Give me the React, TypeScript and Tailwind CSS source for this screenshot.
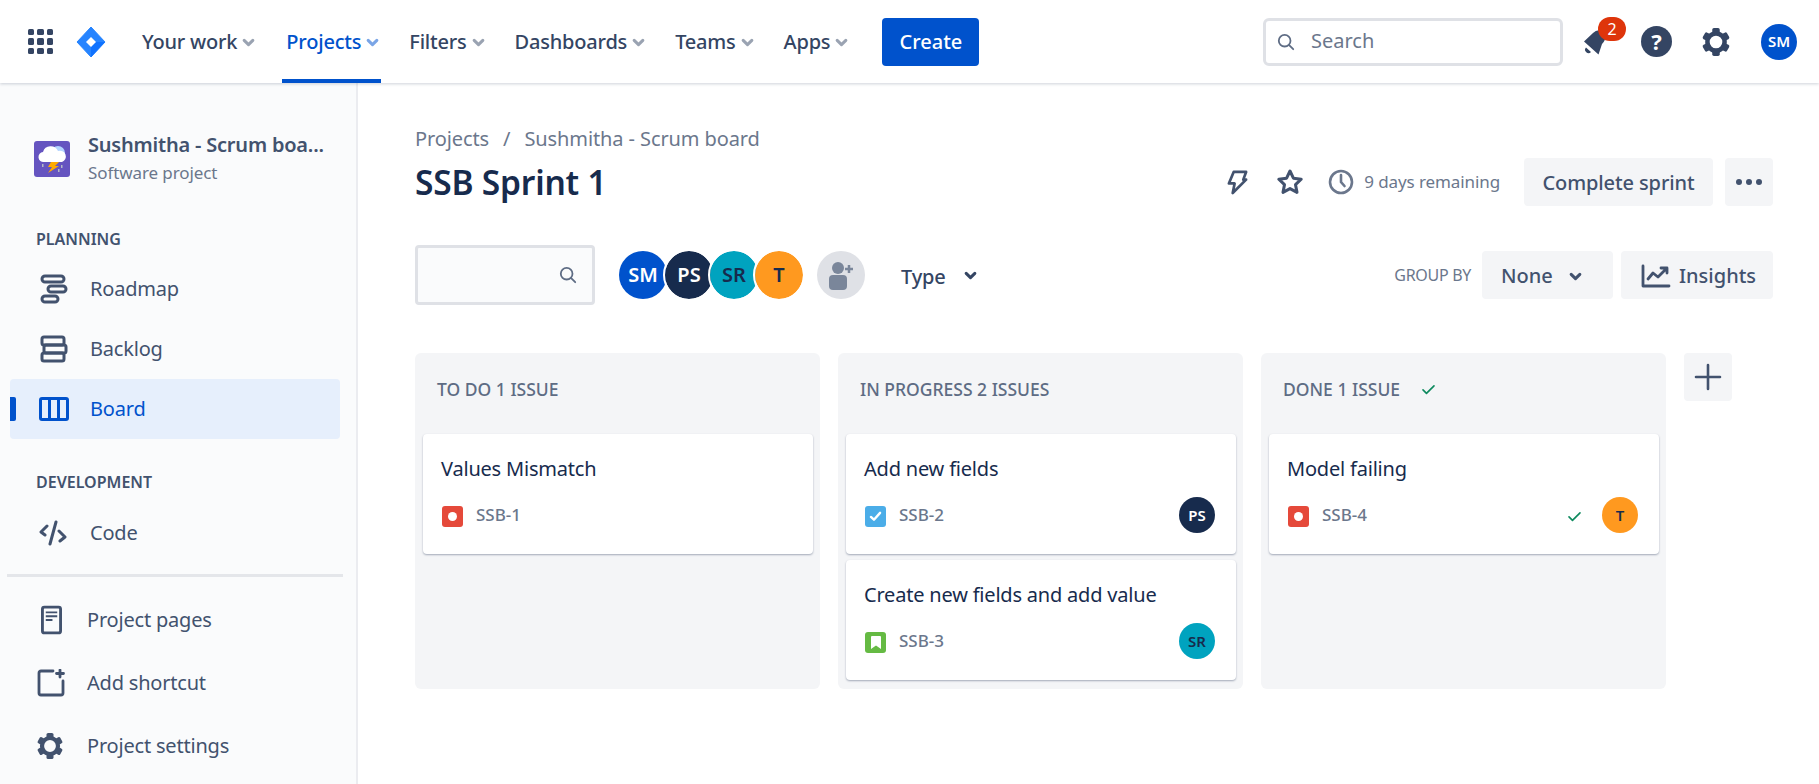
import React from "react";

const Chevron = ({ className = "" }: { className?: string }) => (
  <svg viewBox="0 0 12 8" className={className} fill="none" stroke="currentColor" strokeWidth="2.8" strokeLinecap="round" strokeLinejoin="round">
    <path d="M2 2l4 4 4-4" />
  </svg>
);

const Check = ({ className = "" }: { className?: string }) => (
  <svg viewBox="0 0 16 12" className={className} fill="none" stroke="#0e8a5f" strokeWidth="1.8" strokeLinecap="round" strokeLinejoin="round">
    <path d="M2 6.5l3.8 3.8L14 2" />
  </svg>
);

const Gear = ({ className = "" }: { className?: string }) => (
  <svg viewBox="0 0 28 28" className={className} fill="none">
    <circle cx="14" cy="14" r="8" stroke="currentColor" strokeWidth="4.2" />
    <g fill="currentColor">
      <rect x="10.5" y="1" width="7" height="5" rx="1.6" />
      <rect x="10.5" y="22" width="7" height="5" rx="1.6" />
      <rect x="10.5" y="1" width="7" height="5" rx="1.6" transform="rotate(60 14 14)" />
      <rect x="10.5" y="1" width="7" height="5" rx="1.6" transform="rotate(120 14 14)" />
      <rect x="10.5" y="1" width="7" height="5" rx="1.6" transform="rotate(240 14 14)" />
      <rect x="10.5" y="1" width="7" height="5" rx="1.6" transform="rotate(300 14 14)" />
    </g>
  </svg>
);

const SearchIcon = ({ className = "" }: { className?: string }) => (
  <svg viewBox="0 0 20 20" className={className} fill="none" stroke="currentColor" strokeWidth="2" strokeLinecap="round">
    <circle cx="8.5" cy="8.5" r="6.5" />
    <path d="M13.5 13.5L18 18" />
  </svg>
);

const NavItem = ({ label, active, ml }: { label: string; active?: boolean; ml: string }) => (
  <div className={`relative flex h-full items-center ${ml}`}>
    <span className={`pt-[1px] text-[20px] font-medium tracking-[-0.2px] ${active ? "text-[#0052cc]" : "text-[#344563]"}`}>{label}</span>
    <Chevron className={`ml-[5px] mt-[2px] h-[9px] w-[13px] ${active ? "text-[#7aa5e6]" : "text-[#9aa3b2]"}`} />
    {active && <div className="absolute bottom-0 left-[-4px] right-[-2px] h-[4px] bg-[#0052cc]" />}
  </div>
);

const Avatar = ({ text, bg, fg, size }: { text: string; bg: string; fg: string; size: string }) => (
  <div className={`flex shrink-0 items-center justify-center rounded-full font-semibold ${bg} ${fg} ${size}`}>{text}</div>
);

const SideItem = ({ icon, label, active, iconBox }: { icon: React.ReactNode; label: string; active?: boolean; iconBox: string }) => (
  <div className={`relative mx-[10px] flex h-[60px] w-[330px] shrink-0 items-center rounded-[4px] ${active ? "bg-[#e6effc] text-[#0052cc]" : "text-[#42526e]"}`}>
    {active && <div className="absolute left-0 top-[18px] h-[24px] w-[6px] rounded-r-[2px] bg-[#0052cc]" />}
    <div className={`flex shrink-0 items-center justify-center ${iconBox}`}>{icon}</div>
    <span className="text-[20px] tracking-[-0.2px]">{label}</span>
  </div>
);

const BugIcon = () => (
  <div className="flex h-[21px] w-[21px] shrink-0 items-center justify-center rounded-[3px] bg-[#e5493a]">
    <div className="h-[9px] w-[9px] rounded-full bg-white" />
  </div>
);

const TaskIcon = () => (
  <div className="flex h-[21px] w-[21px] shrink-0 items-center justify-center rounded-[3px] bg-[#4bade8]">
    <svg viewBox="0 0 14 12" className="h-[11px] w-[13px]" fill="none" stroke="#fff" strokeWidth="2.6" strokeLinecap="round" strokeLinejoin="round">
      <path d="M2 6.5l3.3 3L12 2" />
    </svg>
  </div>
);

const StoryIcon = () => (
  <div className="flex h-[21px] w-[21px] shrink-0 items-center justify-center rounded-[3px] bg-[#65ba43]">
    <svg viewBox="0 0 10 13" className="h-[13px] w-[10px]" fill="#fff">
      <path d="M0 1a1 1 0 011-1h8a1 1 0 011 1v12L5 9.5 0 13z" />
    </svg>
  </div>
);

const IssueCard = ({ title, id, icon, right, mt }: { title: string; id: string; icon: React.ReactNode; right?: React.ReactNode; mt?: string }) => (
  <div className={`ml-[8px] mr-[7px] flex h-[120px] flex-col rounded-[4px] bg-white pl-[18px] pr-[21px] shadow-[0_1px_2px_rgba(9,30,66,0.35)] ${mt ?? ""}`}>
    <div className="mt-[21px] h-[28px] text-[20px] leading-[28px] tracking-[-0.2px] text-[#172b4d]">{title}</div>
    <div className="mt-[14px] flex h-[36px] items-center">
      <div className="ml-[1px] mt-[2px]">{icon}</div>
      <span className="ml-[13px] text-[17px] font-medium text-[#6b778c]">{id}</span>
      <div className="ml-auto flex items-center">{right}</div>
    </div>
  </div>
);

const Column = ({ title, children, check }: { title: string; children: React.ReactNode; check?: boolean }) => (
  <div className="h-[336px] w-[405px] shrink-0 rounded-[6px] bg-[#f4f5f7]">
    <div className="flex h-[81px] items-center pb-[8px] pl-[22px]">
      <span className="text-[17.5px] font-medium text-[#5e6c84]">{title}</span>
      {check && <Check className="ml-[21px] h-[11px] w-[15px]" />}
    </div>
    {children}
  </div>
);

export default function App() {
  return (
    <div className="flex h-[784px] w-[1819px] flex-col overflow-hidden bg-white font-['Noto_Sans',sans-serif]">
      <header className="relative z-10 flex h-[83px] shrink-0 items-center bg-white pl-[28px] shadow-[0_1px_3px_rgba(9,30,66,0.2)]">
        <div className="grid h-[25px] w-[25px] grid-cols-3 gap-[3px]">
          {Array.from({ length: 9 }).map((_, i) => (
            <div key={i} className="rounded-[1.5px] bg-[#344563]" />
          ))}
        </div>
        <svg viewBox="0 0 30 30" className="ml-[23px] h-[30px] w-[30px]">
          <path d="M15 0L29 15 15 30 1 15z" fill="#2684ff" stroke="#2684ff" strokeWidth="1" strokeLinejoin="round" />
          <path d="M15 15h14L15 30z" fill="#0065ff" opacity="0.6" />
          <path d="M15 10l5 5-5 5-5-5z" fill="#fff" />
        </svg>
        <div className="flex h-full items-center">
          <NavItem label="Your work" ml="ml-[36px]" />
          <NavItem label="Projects" active ml="ml-[31px]" />
          <NavItem label="Filters" ml="ml-[30px]" />
          <NavItem label="Dashboards" ml="ml-[30px]" />
          <NavItem label="Teams" ml="ml-[30px]" />
          <NavItem label="Apps" ml="ml-[30px]" />
        </div>
        <button className="ml-[34px] flex h-[48px] w-[97px] items-center justify-center rounded-[4px] bg-[#0052cc] pt-[1px] text-[20px] font-medium text-white">Create</button>
        <div className="ml-auto mr-[22px] flex items-center">
          <div className="flex h-[48px] w-[300px] items-center rounded-[6px] border-[3px] border-[#dfe1e6] pl-[11px]">
            <SearchIcon className="h-[18px] w-[18px] text-[#5e6c84]" />
            <span className="ml-[16px] pb-[2px] text-[20px] text-[#6b778c]">Search</span>
          </div>
          <div className="relative ml-[17px] h-[32px] w-[30px]">
            <svg viewBox="0 0 30 32" className="h-[32px] w-[30px]" fill="#344563">
              <path d="M4 15.500L13 7Q17 3 22 5L25 10Q26 14 22 18L18.500 28.500z" />
              <path d="M6 21.500l5 4.500a3 3 0 01-5-4.500z" />
            </svg>
            <div className="absolute left-[18px] top-[-9px] flex h-[24px] w-[28px] items-center justify-center rounded-full bg-[#de350b] text-[16px] text-white">2</div>
          </div>
          <div className="ml-[31px] flex h-[31px] w-[31px] items-center justify-center rounded-full bg-[#344563] text-[22px] font-bold text-white">?</div>
          <Gear className="ml-[29px] h-[30px] w-[30px] text-[#344563]" />
          <Avatar text="SM" bg="bg-[#0052cc]" fg="text-white" size="ml-[30px] h-[36px] w-[36px] text-[15px]" />
        </div>
      </header>

      <div className="flex min-h-0 flex-1">
        <aside className="flex w-[358px] shrink-0 flex-col border-r-[2px] border-[#ebecf0] bg-[#fafbfc]">
          <div className="ml-[34px] mt-[50px] flex items-center">
            <svg viewBox="0 0 36 36" className="h-[36px] w-[36px] shrink-0">
              <rect width="36" height="36" rx="3" fill="#6554c0" />
              <circle cx="24" cy="12" r="7" fill="#b3d4ff" />
              <path d="M10 21a5 5 0 01-1-10 8 8 0 0115-1 5.500 5.500 0 014 11z" fill="#fff" />
              <path d="M17 21h8l-4 4h4l-11 7 4-6h-4z" fill="#ffab00" />
              <g fill="#b3bac5">
                <rect x="8" y="23" width="1.500" height="3" />
                <rect x="27" y="24" width="1.500" height="3" />
                <rect x="24" y="28" width="1.500" height="3" />
              </g>
            </svg>
            <div className="ml-[18px]">
              <div className="text-[20px] font-semibold leading-[24px] tracking-[-0.2px] text-[#42526e]">Sushmitha - Scrum boa...</div>
              <div className="mt-[5px] text-[17px] leading-[22px] tracking-[-0.1px] text-[#6b778c]">Software project</div>
            </div>
          </div>
          <div className="ml-[36px] mt-[45px] h-[20px] text-[16px] font-semibold leading-[20px] text-[#42526e]">PLANNING</div>
          <div className="mt-[10px] flex flex-col">
            <SideItem
              label="Roadmap"
              iconBox="w-[80px] pl-[8px]"
              icon={
                <svg viewBox="0 0 28 30" className="h-[30px] w-[28px]" fill="none" stroke="#42526e" strokeWidth="3">
                  <rect x="2" y="2" width="22" height="6" rx="3" />
                  <rect x="8" y="12" width="18" height="6" rx="3" />
                  <rect x="2" y="22" width="16" height="6" rx="3" />
                </svg>
              }
            />
            <SideItem
              label="Backlog"
              iconBox="w-[80px] pl-[8px]"
              icon={
                <svg viewBox="0 0 28 28" className="h-[28px] w-[28px]" fill="none" stroke="#42526e" strokeWidth="3" strokeLinejoin="round">
                  <rect x="2" y="2" width="22" height="8" rx="2" />
                  <rect x="4" y="10" width="22" height="8" rx="2" />
                  <rect x="2" y="18" width="22" height="8" rx="2" />
                </svg>
              }
            />
            <SideItem
              label="Board"
              active
              iconBox="w-[80px] pl-[8px]"
              icon={
                <svg viewBox="0 0 30 24" className="h-[24px] w-[30px]" fill="none" stroke="#0052cc" strokeWidth="3" strokeLinejoin="round">
                  <rect x="1.500" y="1.500" width="27" height="21" rx="1.500" />
                  <path d="M10.500 1.500v21M19.500 1.500v21" />
                </svg>
              }
            />
          </div>
          <div className="ml-[36px] mt-[33px] h-[20px] text-[16px] font-semibold leading-[20px] text-[#42526e]">DEVELOPMENT</div>
          <div className="mt-[11px]">
            <SideItem
              label="Code"
              iconBox="w-[80px] pl-[6px]"
              icon={
                <svg viewBox="0 0 28 26" className="h-[26px] w-[28px]" fill="none" stroke="#42526e" strokeWidth="3" strokeLinecap="round" strokeLinejoin="round">
                  <path d="M8 6l-6 6 4 3M20 11l6 6-5 4M17 2l-6 22" />
                </svg>
              }
            />
          </div>
          <div className="mx-[7px] mt-[11px] h-[3px] w-[336px] shrink-0 bg-[#e4e6ea]" />
          <div className="mt-[13px] flex flex-col gap-[3px]">
            <SideItem
              label="Project pages"
              iconBox="w-[77px] pl-[5px]"
              icon={
                <svg viewBox="0 0 22 30" className="h-[30px] w-[21px]" fill="none" stroke="#42526e" strokeWidth="3" strokeLinejoin="round">
                  <rect x="1.500" y="1.500" width="19" height="27" rx="2" />
                  <path d="M5 7h12M5 11h12M5 15h7" strokeWidth="2" />
                </svg>
              }
            />
            <SideItem
              label="Add shortcut"
              iconBox="w-[77px] pl-[5px]"
              icon={
                <svg viewBox="0 0 28 28" className="h-[28px] w-[28px]" fill="none" stroke="#42526e" strokeWidth="2.800" strokeLinecap="round" strokeLinejoin="round">
                  <path d="M16 2H4a2 2 0 00-2 2v20a2 2 0 002 2h20a2 2 0 002-2V12" />
                  <path d="M23 1v7M19.500 4.500h7" />
                </svg>
              }
            />
            <SideItem
              label="Project settings"
              iconBox="w-[77px] pl-[3px]"
              icon={<Gear className="h-[28px] w-[28px] text-[#42526e]" />}
            />
          </div>
        </aside>

        <main className="min-w-0 flex-1 pl-[57px] pr-[46px]">
          <div className="mt-[42px] flex h-[27px] items-center text-[20px] tracking-[-0.1px] text-[#6b778c]">
            <span>Projects</span>
            <span className="mx-[14px]">/</span>
            <span>Sushmitha - Scrum board</span>
          </div>
          <div className="mt-[6px] flex h-[48px] items-center">
            <h1 className="text-[33.5px] font-semibold tracking-[-0.2px] text-[#172b4d]">SSB Sprint 1</h1>
            <div className="ml-auto flex items-center">
              <svg viewBox="0 0 24 28" className="h-[27px] w-[23px]" fill="none" stroke="#42526e" strokeWidth="2.800" strokeLinejoin="round">
                <path d="M8 3h13l-3 8h3L7 25l2-10H3z" />
              </svg>
              <svg viewBox="0 0 28 28" className="ml-[27px] h-[28px] w-[28px]" fill="none" stroke="#42526e" strokeWidth="3" strokeLinejoin="round">
                <path d="M14 3l3.400 7.200 7.800 1-5.700 5.400 1.500 7.800-7-3.800-7 3.800 1.500-7.800-5.700-5.400 7.800-1z" />
              </svg>
              <svg viewBox="0 0 26 26" className="ml-[24px] h-[26px] w-[26px]" fill="none" stroke="#6b778c" strokeWidth="2.600" strokeLinecap="round">
                <circle cx="13" cy="13" r="11" />
                <path d="M13 6v7l3.500 4" />
              </svg>
              <span className="ml-[10px] text-[17px] tracking-[-0.1px] text-[#6b778c]">9 days remaining</span>
              <button className="ml-[24px] flex h-[48px] w-[189px] items-center justify-center rounded-[4px] bg-[#f4f5f7] pt-[1px] text-[20px] font-medium tracking-[-0.1px] text-[#42526e]">Complete sprint</button>
              <button className="ml-[12px] flex h-[48px] w-[48px] items-center justify-center gap-[4px] rounded-[4px] bg-[#f4f5f7]">
                <span className="h-[6px] w-[6px] rounded-full bg-[#42526e]" />
                <span className="h-[6px] w-[6px] rounded-full bg-[#42526e]" />
                <span className="h-[6px] w-[6px] rounded-full bg-[#42526e]" />
              </button>
            </div>
          </div>
          <div className="mt-[39px] flex h-[60px] items-center">
            <div className="flex h-[60px] w-[180px] items-center justify-end rounded-[4px] border-[3px] border-[#dfe1e6] bg-[#fafbfc] pr-[15px]">
              <SearchIcon className="h-[18px] w-[18px] text-[#5e6c84]" />
            </div>
            <div className="ml-[24px] flex items-center">
              <Avatar text="SM" bg="bg-[#0052cc]" fg="text-white" size="h-[48px] w-[48px] text-[20px]" />
              <Avatar text="PS" bg="bg-[#172b4d]" fg="text-white" size="-ml-[2px] h-[48px] w-[48px] text-[20px] outline-[2px] outline-white" />
              <Avatar text="SR" bg="bg-[#00a3bf]" fg="text-[#172b4d]" size="-ml-[3px] h-[48px] w-[48px] text-[20px] outline-[2px] outline-white" />
              <Avatar text="T" bg="bg-[#ff991f]" fg="text-[#172b4d]" size="-ml-[3px] h-[48px] w-[48px] text-[20px] outline-[2px] outline-white" />
            </div>
            <div className="ml-[14px] flex h-[48px] w-[48px] items-center justify-center rounded-full bg-[#dfe1e6]">
              <svg viewBox="0 0 28 32" className="h-[32px] w-[28px]" fill="#7a869a">
                <circle cx="11" cy="9" r="6" />
                <path d="M2 20a4 4 0 014-4h10a4 4 0 014 4v7a4 4 0 01-4 4H6a4 4 0 01-4-4z" />
                <path d="M22 6v8M18 10h8" stroke="#7a869a" strokeWidth="2.500" />
              </svg>
            </div>
            <span className="ml-[36px] pt-[3px] text-[20px] font-medium tracking-[-0.2px] text-[#344563]">Type</span>
            <Chevron className="ml-[19px] h-[9px] w-[13px] text-[#344563]" />
            <div className="ml-auto flex items-center">
              <span className="text-[16px] tracking-[-0.3px] text-[#6b778c]">GROUP BY</span>
              <button className="ml-[11px] flex h-[48px] w-[131px] items-center rounded-[4px] bg-[#f4f5f7] pl-[19px] pt-[2px] text-[20px] font-medium text-[#42526e]">
                None
                <Chevron className="ml-[16px] h-[9px] w-[13px]" />
              </button>
              <button className="ml-[8px] flex h-[48px] w-[152px] items-center rounded-[4px] bg-[#f4f5f7] pl-[20px] pt-[2px] text-[20px] font-medium text-[#42526e]">
                <svg viewBox="0 0 30 24" className="mr-[8px] h-[24px] w-[30px]" fill="none" stroke="#42526e" strokeWidth="2.800" strokeLinecap="round" strokeLinejoin="round">
                  <path d="M2 2v20h26M7 15l5-6 5 4 8-8M20 4h6v5" />
                </svg>
                Insights
              </button>
            </div>
          </div>
          <div className="mt-[48px] flex items-start gap-[18px]">
            <Column title="TO DO 1 ISSUE">
              <IssueCard title="Values Mismatch" id="SSB-1" icon={<BugIcon />} />
            </Column>
            <Column title="IN PROGRESS 2 ISSUES">
              <IssueCard title="Add new fields" id="SSB-2" icon={<TaskIcon />} right={<Avatar text="PS" bg="bg-[#172b4d]" fg="text-white" size="h-[36px] w-[36px] text-[15px]" />} />
              <IssueCard title="Create new fields and add value" id="SSB-3" icon={<StoryIcon />} mt="mt-[6px]" right={<Avatar text="SR" bg="bg-[#00a3bf]" fg="text-[#172b4d]" size="h-[36px] w-[36px] text-[15px]" />} />
            </Column>
            <Column title="DONE 1 ISSUE" check>
              <IssueCard
                title="Model failing"
                id="SSB-4"
                icon={<BugIcon />}
                right={
                  <>
                    <Check className="mr-[20px] mt-[2px] h-[11px] w-[15px]" />
                    <Avatar text="T" bg="bg-[#ff991f]" fg="text-[#172b4d]" size="h-[36px] w-[36px] text-[15px]" />
                  </>
                }
              />
            </Column>
            <button className="flex h-[48px] w-[48px] shrink-0 items-center justify-center rounded-[4px] bg-[#f4f5f7]">
              <svg viewBox="0 0 28 28" className="h-[28px] w-[28px]" fill="none" stroke="#42526e" strokeWidth="2.600" strokeLinecap="round">
                <path d="M14 2v24M2 14h24" />
              </svg>
            </button>
          </div>
        </main>
      </div>
    </div>
  );
}
